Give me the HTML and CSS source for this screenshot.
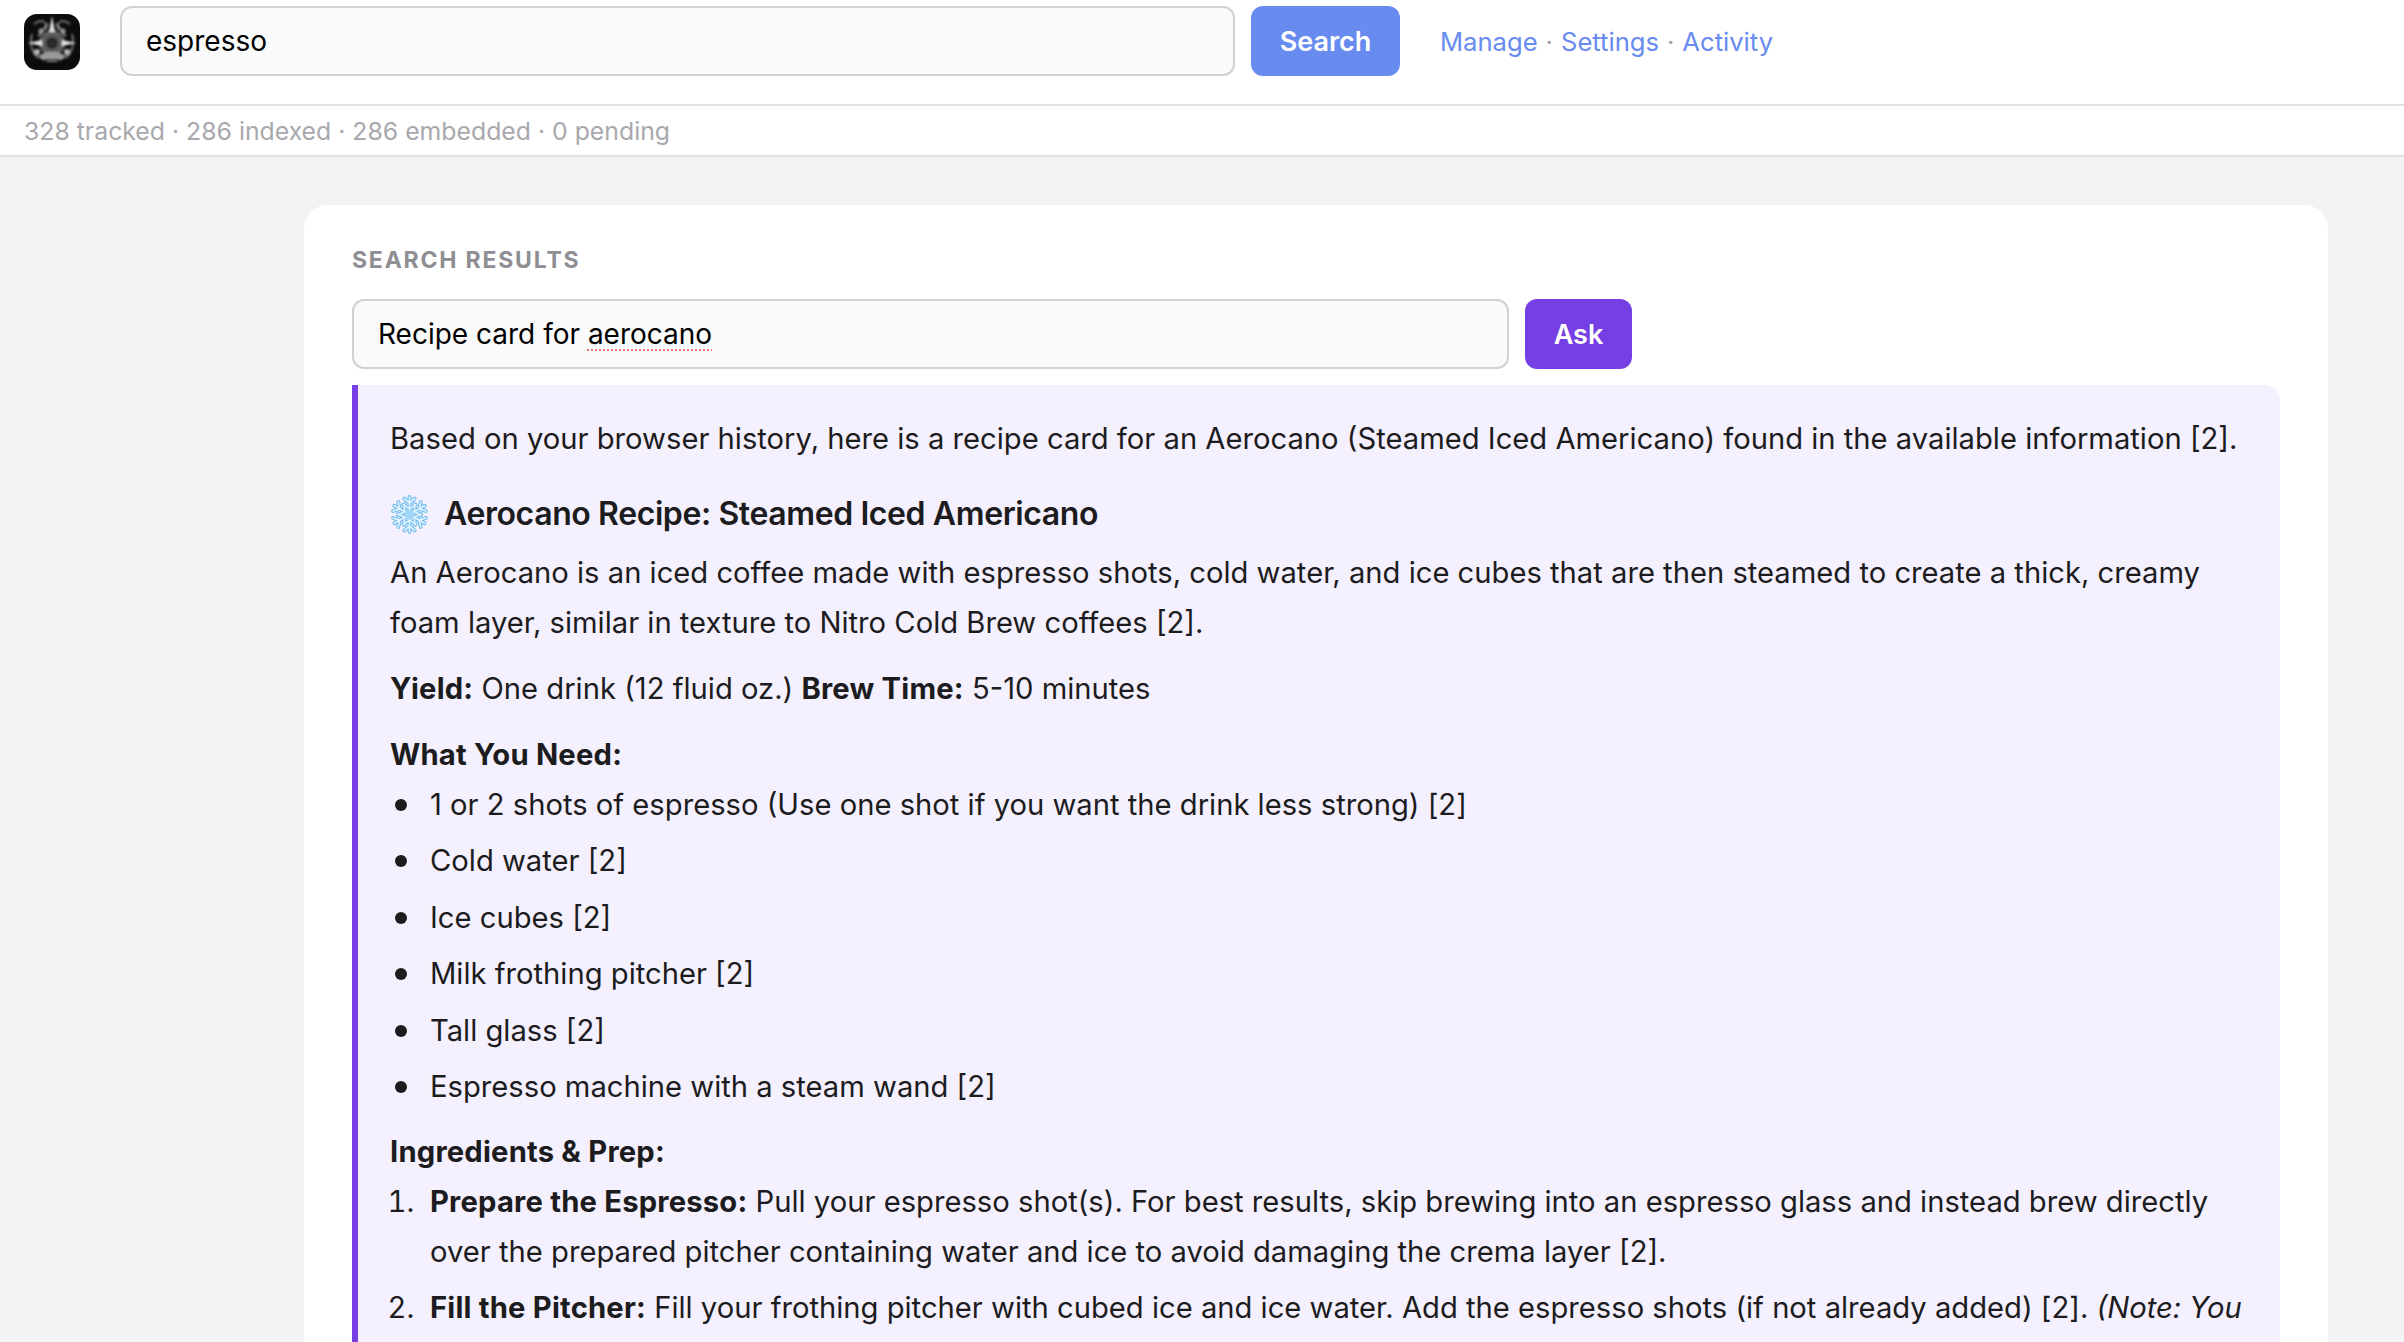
FILE: index.html
```html
<!DOCTYPE html>
<html lang="en">
<head>
<meta charset="utf-8">
<title>Search results</title>
<link rel="stylesheet" href="styles.css">
</head>
<body>
<header class="topbar">
  <svg class="logo" viewBox="0 0 56 56" aria-hidden="true">
    <defs>
      <filter id="soft"><feGaussianBlur stdDeviation="0.9"/></filter>
      <clipPath id="logoclip"><rect width="56" height="56" rx="13"/></clipPath>
    </defs>
    <g clip-path="url(#logoclip)">
      <rect width="56" height="56" fill="#0c0c0c"/>
      <g filter="url(#soft)">
        <path d="M10 10C18 4 24 8 22 16M46 10C38 4 32 8 34 16M8 20C5 30 8 38 14 44M48 20C51 30 48 38 42 44" fill="none" stroke="#6e6e6e" stroke-width="2"/>
        <path d="M14 22C20 18 20 12 24 10M42 22C36 18 36 12 32 10" fill="none" stroke="#8a8a8a" stroke-width="2"/>
        <circle cx="28" cy="29" r="13" fill="#5c5c5c"/>
        <circle cx="28" cy="29" r="6" fill="#2a2a2a"/>
        <path d="M28 2L31 18H25ZM4 29L18 26V32ZM52 29L38 26V32Z" fill="#e2e2e2"/>
        <path d="M14 42C20 50 36 50 42 42L34 38H22Z" fill="#9a9a9a"/>
        <path d="M20 46H36" stroke="#2a2a2a" stroke-width="2"/>
        <circle cx="13" cy="38" r="3" fill="#b5b5b5"/>
        <circle cx="43" cy="38" r="3" fill="#b5b5b5"/>
        <circle cx="17" cy="17" r="2.5" fill="#9a9a9a"/>
        <circle cx="39" cy="17" r="2.5" fill="#9a9a9a"/>
      </g>
    </g>
  </svg>
  <div class="field field-top">espresso</div>
  <button class="btn btn-search" type="button">Search</button>
  <nav class="links">
    <a href="#">Manage</a><span class="sep">·</span><a href="#">Settings</a><span class="sep">·</span><a href="#">Activity</a>
  </nav>
</header>
<div class="status">328 tracked · 286 indexed · 286 embedded · 0 pending</div>
<main class="main">
  <section class="card">
    <h2 class="label">Search results</h2>
    <div class="ask-row">
      <div class="field field-ask">Recipe card for <span class="misspelt">aerocano</span></div>
      <button class="btn btn-ask" type="button">Ask</button>
    </div>
    <article class="answer">
      <p>Based on your browser history, here is a recipe card for an Aerocano (Steamed Iced Americano) found in the available information [2].</p>
      <h3 class="recipe-title">
        <svg class="flake" viewBox="1 1 38 38" aria-hidden="true">
          <g fill="none" stroke-linecap="round" stroke="#74bdee" stroke-width="3.8">
            <path id="arm" d="M20 20V3M20 9L15 4.5M20 9L25 4.5M20 14.5L14 10.5M20 14.5L26 10.5"/>
            <use href="#arm" transform="rotate(60 20 20)"/>
            <use href="#arm" transform="rotate(120 20 20)"/>
            <use href="#arm" transform="rotate(180 20 20)"/>
            <use href="#arm" transform="rotate(240 20 20)"/>
            <use href="#arm" transform="rotate(300 20 20)"/>
          </g>
          <g fill="none" stroke-linecap="round" stroke="#e0f4fe" stroke-width="1.6">
            <path id="armi" d="M20 20V3M20 9L15 4.5M20 9L25 4.5M20 14.5L14 10.5M20 14.5L26 10.5"/>
            <use href="#armi" transform="rotate(60 20 20)"/>
            <use href="#armi" transform="rotate(120 20 20)"/>
            <use href="#armi" transform="rotate(180 20 20)"/>
            <use href="#armi" transform="rotate(240 20 20)"/>
            <use href="#armi" transform="rotate(300 20 20)"/>
          </g>
          <circle cx="20" cy="20" r="4.5" fill="#9fd8f8"/>
        </svg>
        <span>Aerocano Recipe: Steamed Iced Americano</span>
      </h3>
      <p>An Aerocano is an iced coffee made with espresso shots, cold water, and ice cubes that are then steamed to create a thick, creamy foam layer, similar in texture to Nitro Cold Brew coffees [2].</p>
      <p><strong>Yield:</strong> One drink (12 fluid oz.) <strong>Brew Time:</strong> 5-10 minutes</p>
      <p class="lead"><strong>What You Need:</strong></p>
      <ul>
        <li>1 or 2 shots of espresso (Use one shot if you want the drink less strong) [2]</li>
        <li>Cold water [2]</li>
        <li>Ice cubes [2]</li>
        <li>Milk frothing pitcher [2]</li>
        <li>Tall glass [2]</li>
        <li>Espresso machine with a steam wand [2]</li>
      </ul>
      <p class="lead"><strong>Ingredients &amp; Prep:</strong></p>
      <ol>
        <li><strong>Prepare the Espresso:</strong> Pull your espresso shot(s). For best results, skip brewing into an espresso glass and instead brew directly over the prepared pitcher containing water and ice to avoid damaging the crema layer [2].</li>
        <li><strong>Fill the Pitcher:</strong> Fill your frothing pitcher with cubed ice and ice water. Add the espresso shots (if not already added) [2]. <em>(Note: You</em></li>
      </ol>
    </article>
  </section>
</main>
</body>
</html>
```
FILE: styles.css
```css
* { box-sizing: border-box; }
html, body { margin: 0; height: 100%; overflow: hidden; }
body {
  background: #f3f3f6;
  color: #1c1c1e;
  font-family: Inter, "Liberation Sans", sans-serif;
  font-size: 29.2px;
  line-height: 50px;
}
.topbar {
  display: flex;
  align-items: center;
  height: 106px;
  padding: 6px 24px 28px;
  background: #fff;
  border-bottom: 2px solid #e1e1e6;
}
.logo { width: 56px; height: 56px; flex: none; margin: 1px 40px 0 0; }
.field {
  height: 70px;
  padding: 0 24px;
  background: #fafafa;
  border: 2px solid #d1d1d6;
  border-radius: 12px;
  color: #000;
  font-size: 28px;
  line-height: 67px;
  white-space: nowrap;
}
.field-top { width: 1115px; flex: none; }
.field-ask { width: 1157px; flex: none; }
.misspelt {
  text-decoration: underline dotted #f0736a 2px;
  text-underline-offset: 5px;
}
.btn {
  height: 70px;
  padding: 0;
  border: 0;
  border-radius: 12px;
  color: #fff;
  font-family: inherit;
  font-size: 27px;
  font-weight: 600;
}
.btn-search { width: 149px; margin-left: 16px; background: #678bef; }
.btn-ask { width: 107px; margin-left: 16px; background: #763fe4; }
.links { margin-left: 40px; padding-top: 1px; font-size: 25.6px; color: #a0a0a5; }
.links a { color: #678bef; text-decoration: none; }
.sep { margin: 0 8px; }
.status {
  height: 51px;
  padding-left: 24px;
  background: #fff;
  border-bottom: 2px solid #e1e1e6;
  color: #a8a8ad;
  font-size: 24.8px;
  line-height: 50px;
}
.main { padding: 48px 76px 0 304px; }
.card {
  padding: 41px 48px 48px;
  background: #fff;
  border-radius: 24px;
}
.label {
  margin: 0 0 25px;
  color: #8e8e93;
  font-size: 23px;
  font-weight: 700;
  letter-spacing: 1.8px;
  line-height: 28px;
  text-transform: uppercase;
}
.ask-row { display: flex; margin-bottom: 16px; }
.answer {
  padding: 29px 32px 40px;
  background: #f4f0fd;
  border-left: 6px solid #763fe4;
  border-radius: 0 16px 16px 0;
}
.answer p { margin: 0 0 16px; }
.answer p.lead { margin-bottom: 0; }
.answer strong { letter-spacing: 0.2px; }
.recipe-title {
  display: flex;
  align-items: center;
  gap: 15px;
  height: 46px;
  margin: 27px 0 11px;
  font-size: 32px;
  font-weight: 600;
  letter-spacing: -0.4px;
  line-height: 46px;
}
.flake { width: 39px; height: 39px; flex: none; }
.answer ul, .answer ol { margin: 0 0 15px; padding-left: 40px; }
.answer ul { list-style: none; }
.answer li { margin-bottom: 6.4px; }
.answer ul li { position: relative; }
.answer ul li::before {
  content: "";
  position: absolute;
  left: -35px;
  top: 19px;
  width: 12px;
  height: 12px;
  border-radius: 50%;
  background: #1c1c1e;
}
.answer ol li::marker { content: counter(list-item) ". \a0"; }
```
